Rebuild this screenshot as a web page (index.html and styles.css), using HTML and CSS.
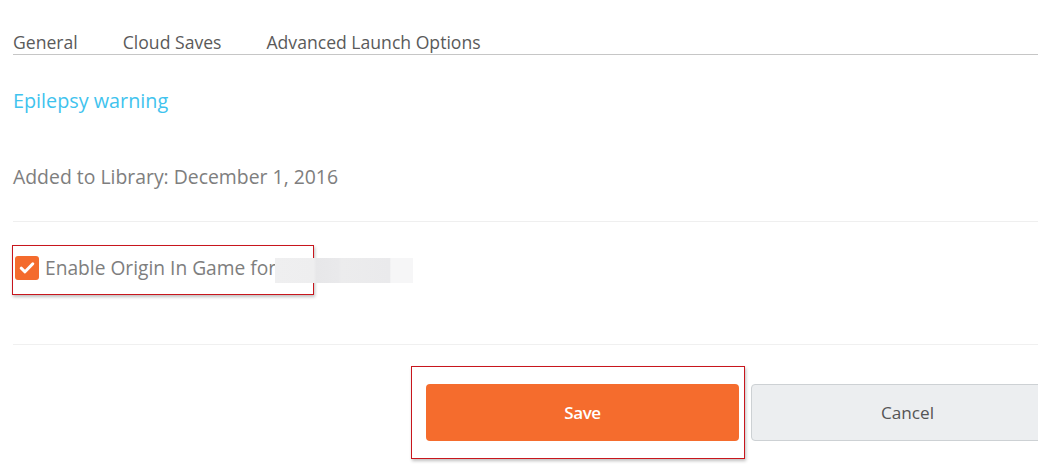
FILE: index.html
```html
<!DOCTYPE html>
<html>
<head>
<meta charset="utf-8">
<link rel="stylesheet" href="styles.css">
</head>
<body>
<div class="page">
  <nav class="tabs">
    <span class="tab">General</span>
    <span class="tab">Cloud Saves</span>
    <span class="tab">Advanced Launch Options</span>
  </nav>
  <a class="warning">Epilepsy warning</a>
  <p class="added">Added to Library: December 1, 2016</p>
  <div class="sep sep-top"></div>
  <div class="check-row">
    <label class="check-wrap">
      <span class="checkbox">
        <svg width="16" height="14" viewBox="0 0 16 14"><path d="M2.2 7.2 L6 10.8 L13.8 2.8" fill="none" stroke="#fff" stroke-width="3" stroke-linecap="round" stroke-linejoin="round"/></svg>
      </span>
      <span class="check-label">Enable Origin In Game for</span>
    </label>
    <span class="blur"></span>
  </div>
  <div class="sep sep-bottom"></div>
  <div class="buttons">
    <div class="save-wrap"><button class="btn btn-save">Save</button></div>
    <button class="btn btn-cancel">Cancel</button>
  </div>
</div>
</body>
</html>
```
FILE: styles.css
```css
html, body {
  margin: 0;
  padding: 0;
  background: #fff;
  overflow: hidden;
}
body {
  width: 1038px;
  height: 466px;
  font-family: "Open Sans", "Liberation Sans", sans-serif;
}
.page {
  padding: 31px 0 0 13px;
}
.tabs {
  display: flex;
  gap: 45px;
  border-bottom: 1px solid #c6c6c6;
  height: 23px;
}
.tab {
  font-size: 17.6px;
  color: #5a5a5a;
  line-height: 22px;
}
.warning {
  display: block;
  margin-top: 34px;
  font-size: 19.8px;
  line-height: 24px;
  color: #3fc3ee;
}
.added {
  margin: 52px 0 0;
  font-size: 19.4px;
  line-height: 24px;
  color: #7e7e7e;
}
.sep {
  height: 1px;
  background: #efefef;
}
.sep-top {
  margin-top: 32px;
}
.check-row {
  display: flex;
  align-items: center;
  margin-top: 23px;
}
.check-wrap {
  display: flex;
  align-items: center;
  gap: 6px;
  margin-left: -1px;
  padding: 0 0 4px 2px;
  border: 1px solid #c8161d;
  box-shadow: 1px 2px 3px rgba(0,0,0,0.25);
  box-sizing: border-box;
  width: 302px;
  height: 50px;
}
.checkbox {
  flex: none;
  width: 24px;
  height: 24px;
  border-radius: 3px;
  background: #f46b2d;
  display: flex;
  align-items: center;
  justify-content: center;
}
.check-label {
  font-size: 19.2px;
  color: #7e7e7e;
  line-height: 24px;
  white-space: nowrap;
}
.blur {
  width: 138px;
  height: 25px;
  margin-left: -39px;
  background: linear-gradient(90deg, #efeff0 0, #eeeeef 28%, #e7e7e9 30%, #e9e9eb 46%, #ececed 48%, #eaeaec 83%, #f6f6f7 84%, #f6f6f7 100%);
}
.sep-bottom {
  margin-top: 49px;
  background: #f0f0f0;
}
.buttons {
  display: flex;
  align-items: center;
  gap: 6px;
  margin-top: 21px;
  padding-left: 398px;
}
.save-wrap {
  border: 1px solid #c8161d;
  box-shadow: 1px 2px 3px rgba(0,0,0,0.25);
  padding: 17px 5px 17px 14px;
  width: 334px;
  height: 93px;
  box-sizing: border-box;
}
.btn {
  font-family: "Open Sans", "Liberation Sans", sans-serif;
  height: 57px;
  border-radius: 4px;
  cursor: pointer;
}
.btn-save {
  width: 313px;
  background: #f56c2d;
  color: #fff;
  border: none;
  font-size: 17px;
  font-weight: 600;
  letter-spacing: -0.4px;
}
.btn-cancel {
  flex: none;
  width: 313px;
  background: #eceef0;
  border: 1px solid #cdd1d4;
  color: #555;
  font-size: 17.2px;
}
```
